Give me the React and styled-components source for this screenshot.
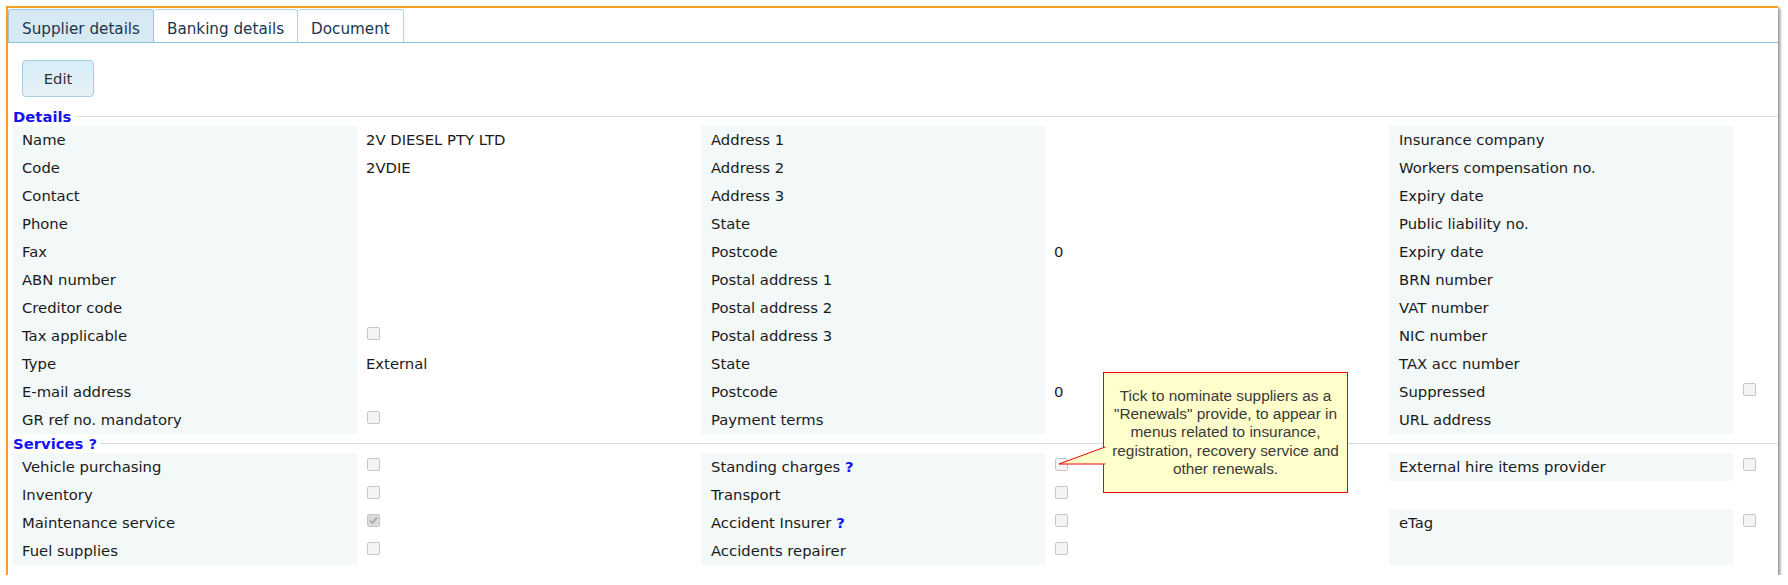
import React from "react";
import styled, { createGlobalStyle } from "styled-components";

const GlobalStyle = createGlobalStyle`
  html, body {
    margin: 0;
    padding: 0;
    background: #ffffff;
  }
  body {
    font-family: "DejaVu Sans", Verdana, sans-serif;
    color: #1a1a1a;
  }
`;

const Panel = styled.div`
  position: relative;
  box-sizing: border-box;
  margin: 6px 0 0 6px;
  width: 1772px;
  height: 569px;
  border-top: 2px solid #f6a21e;
  border-left: 2px solid #f6a21e;
  background: #fff;
  box-shadow: 2px 2px 3px rgba(0, 0, 0, 0.45);
`;

const TabBar = styled.div`
  display: flex;
  padding-top: 1px;
  border-bottom: 1px solid #8fc3da;
`;

const Tab = styled.div`
  box-sizing: border-box;
  height: 33px;
  padding: 10px 13px 0;
  font-size: 15.2px;
  line-height: 18px;
  color: #1a3550;
  background: ${(p) => (p.$active ? "#d7eaf4" : "#ffffff")};
  border: 1px solid ${(p) => (p.$active ? "#98c8de" : "#b3d6e6")};
  border-bottom: none;
  border-left-width: ${(p) => (p.$first ? "1px" : "0")};
  border-radius: 3px 3px 0 0;
  white-space: nowrap;
`;

const Toolbar = styled.div`
  display: flex;
  padding: 17px 0 0 14px;
`;

const EditButton = styled.button`
  display: flex;
  align-items: center;
  justify-content: center;
  box-sizing: border-box;
  width: 72px;
  height: 37px;
  font-family: "DejaVu Sans", Verdana, sans-serif;
  font-size: 14.8px;
  color: #333;
  background: linear-gradient(#d9ecf6, #e7f2f8);
  border: 1px solid #a3cde0;
  border-radius: 4px;
  padding: 0;
`;

const SectionHead = styled.div`
  display: flex;
  align-items: center;
  height: 19px;
  margin: ${(p) => (p.$first ? "10px 0 0 4px" : "0 0 0 4px")};
  padding-left: 1px;
`;

const Legend = styled.span`
  font-size: 14.8px;
  font-weight: bold;
  color: #1212f2;
  white-space: nowrap;
`;

const Rule = styled.span`
  flex: 1;
  height: 1px;
  margin-left: 3px;
  background: #dedede;
`;

const Grid = styled.div`
  display: grid;
  grid-template-columns: 345px 344px 344px 344px 344px 1fr;
  grid-auto-rows: 28px;
  margin-left: 4px;
`;

const Label = styled.div`
  grid-row: ${(p) => (p.$span ? `span ${p.$span}` : "auto")};
  padding-left: 10px;
  font-size: 14.8px;
  line-height: 28px;
  white-space: nowrap;
  background: ${(p) => (p.$blank ? "transparent" : "#f3f8f8")};
`;

const Value = styled.div`
  display: flex;
  align-items: flex-start;
  padding-left: 9px;
  font-size: 14.8px;
  line-height: 28px;
  white-space: nowrap;
`;

const Box = styled.span`
  position: relative;
  display: inline-block;
  box-sizing: border-box;
  width: 13px;
  height: 13px;
  margin: 5px 0 0 1px;
  border: 1px solid #c6c6c6;
  border-radius: 2px;
  background: ${(p) => (p.$checked ? "#dadada" : "#f4f4f4")};
`;

const Help = styled.span`
  font-weight: bold;
  color: #1010ee;
`;

const Tooltip = styled.div`
  position: absolute;
  left: 1095px;
  top: 364px;
  box-sizing: border-box;
  width: 245px;
  height: 121px;
  display: flex;
  align-items: center;
  justify-content: center;
  text-align: center;
  font-family: "Liberation Sans", Arial, sans-serif;
  font-size: 15.4px;
  line-height: 18.2px;
  color: #3a3a3a;
  background: #ffffcc;
  border: 1px solid #f00000;
`;

const Tail = styled.svg`
  position: absolute;
  left: -46px;
  top: 74px;
  overflow: visible;
`;

const Checkbox = ({ checked }) => (
  <Box $checked={checked}>
    {checked && (
      <svg width="11" height="11" viewBox="0 0 11 11" style={{ position: "absolute", left: 0, top: 0 }}>
        <path d="M2 5.6 L4.4 8 L9 2.6" fill="none" stroke="#a9a9a9" strokeWidth="1.8" />
      </svg>
    )}
  </Box>
);

const renderValue = (v) => {
  if (v === "cb") return <Checkbox />;
  if (v === "cbx") return <Checkbox checked />;
  return v || "";
};

const renderLabel = (l) =>
  Array.isArray(l) ? (
    <>
      {l[0]} <Help>?</Help>
    </>
  ) : (
    l
  );

const details = [
  ["Name", "2V DIESEL PTY LTD", "Address 1", "", "Insurance company", ""],
  ["Code", "2VDIE", "Address 2", "", "Workers compensation no.", ""],
  ["Contact", "", "Address 3", "", "Expiry date", ""],
  ["Phone", "", "State", "", "Public liability no.", ""],
  ["Fax", "", "Postcode", "0", "Expiry date", ""],
  ["ABN number", "", "Postal address 1", "", "BRN number", ""],
  ["Creditor code", "", "Postal address 2", "", "VAT number", ""],
  ["Tax applicable", "cb", "Postal address 3", "", "NIC number", ""],
  ["Type", "External", "State", "", "TAX acc number", ""],
  ["E-mail address", "", "Postcode", "0", "Suppressed", "cb"],
  ["GR ref no. mandatory", "cb", "Payment terms", "", "URL address", ""],
];

const services = [
  ["Vehicle purchasing", "cb", ["Standing charges"], "cb", "External hire items provider", "cb"],
  ["Inventory", "cb", "Transport", "cb", { blank: true }, ""],
  ["Maintenance service", "cbx", ["Accident Insurer"], "cb", { text: "eTag", span: 2 }, "cb"],
  ["Fuel supplies", "cb", "Accidents repairer", "cb", null, ""],
];

const Row = ({ cells }) => (
  <>
    {cells.map((c, i) => {
      if (i % 2 === 1) return <Value key={i}>{renderValue(c)}</Value>;
      if (c === null) return null;
      if (c && c.blank) return <Label key={i} $blank />;
      if (c && c.text) return <Label key={i} $span={c.span}>{c.text}</Label>;
      return <Label key={i}>{renderLabel(c)}</Label>;
    })}
  </>
);

export default function App() {
  return (
    <>
      <GlobalStyle />
      <Panel>
        <TabBar>
          <Tab $active $first>Supplier details</Tab>
          <Tab>Banking details</Tab>
          <Tab>Document</Tab>
        </TabBar>
        <Toolbar>
          <EditButton>Edit</EditButton>
        </Toolbar>

        <SectionHead $first>
          <Legend>Details</Legend>
          <Rule />
        </SectionHead>
        <Grid>
          {details.map((r, i) => (
            <Row key={i} cells={r} />
          ))}
        </Grid>

        <SectionHead>
          <Legend>Services ?</Legend>
          <Rule />
        </SectionHead>
        <Grid>
          {services.map((r, i) => (
            <Row key={i} cells={r} />
          ))}
        </Grid>

        <Tooltip>
          <Tail width="47" height="19">
            <polygon points="47,0 1,17 47,17" fill="#ffffcc" stroke="#f00000" strokeWidth="1" />
            <rect x="45.5" y="0.8" width="3" height="15.6" fill="#ffffcc" />
          </Tail>
          <div>
            Tick to nominate suppliers as a<br />
            "Renewals" provide, to appear in<br />
            menus related to insurance,<br />
            registration, recovery service and<br />
            other renewals.
          </div>
        </Tooltip>
      </Panel>
    </>
  );
}
